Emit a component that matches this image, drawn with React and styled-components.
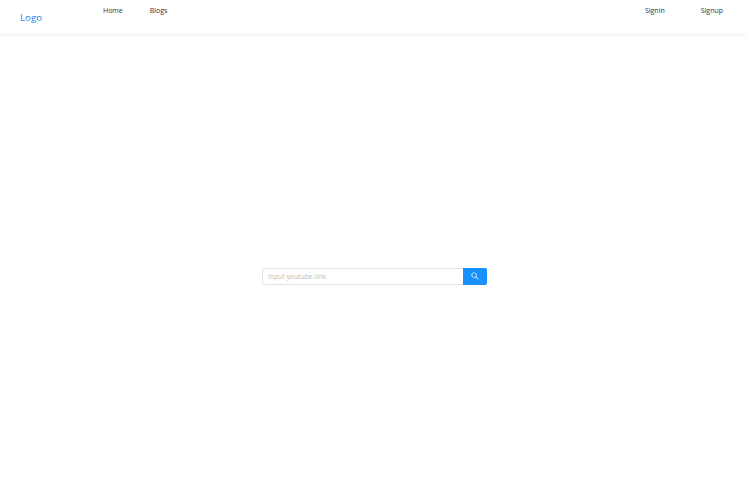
import React from 'react'
import styled, { createGlobalStyle } from 'styled-components'

const GlobalStyle = createGlobalStyle`
  html, body {
    margin: 0;
    height: 100%;
    background: #fff;
    font-family: "Open Sans", "Noto Sans", sans-serif;
  }
  #root {
    height: 100%;
  }
`

const Page = styled.div`
  display: flex;
  flex-direction: column;
  height: 482px;
`

const Header = styled.header`
  display: flex;
  align-items: flex-start;
  height: 33px;
  flex-shrink: 0;
  background: #fff;
  box-shadow: 0 1px 8px rgba(0, 0, 0, 0.07);
`

const Logo = styled.a`
  width: 83px;
  padding-left: 20px;
  font-size: 9.7px;
  line-height: 35px;
  color: #2a7fe6;
`

const NavLink = styled.a`
  font-size: 7px;
  line-height: 21px;
  color: #33333a;
  margin-right: ${props => props.$gap}px;
`

const Spacer = styled.div`
  flex: 1;
`

const Main = styled.main`
  flex: 1;
  display: flex;
  justify-content: center;
  padding: 235px 1px 0 0;
`

const SearchBar = styled.form`
  display: flex;
  width: 225px;
  height: 17px;
`

const SearchInput = styled.input`
  flex: 1;
  min-width: 0;
  box-sizing: border-box;
  height: 100%;
  padding: 0 5px;
  border: 1px solid #e2e2e2;
  border-right: 0;
  border-radius: 2px 0 0 2px;
  outline: none;
  font-family: inherit;
  font-size: 6.8px;
  color: #333;

  &::placeholder {
    color: #bdbdbd;
    opacity: 1;
  }
`

const SearchButton = styled.button`
  display: flex;
  align-items: center;
  justify-content: center;
  width: 24px;
  height: 100%;
  padding: 0 0 2px;
  border: 0;
  border-radius: 0 2px 2px 0;
  background: #1890ff;
  color: #fff;
`

const SearchIcon = () => (
  <svg width="8" height="8" viewBox="64 64 896 896" fill="currentColor">
    <path d="M909.6 854.5L649.9 594.8C690.2 542.7 712 479 712 412c0-80.2-31.3-155.4-87.9-212.1-56.6-56.7-132-87.9-212.1-87.9s-155.5 31.3-212.1 87.9C143.2 256.5 112 331.8 112 412c0 80.1 31.3 155.5 87.9 212.1C256.5 680.8 331.8 712 412 712c67 0 130.6-21.8 182.7-62l259.7 259.6a8.2 8.2 0 0 0 11.6 0l43.6-43.5a8.2 8.2 0 0 0 0-11.6zM570.4 570.4C528 612.7 471.8 636 412 636s-116-23.3-158.4-65.6C211.3 528 188 471.8 188 412s23.3-116.1 65.6-158.4C296 211.3 352.2 188 412 188s116.1 23.2 158.4 65.6S636 352.2 636 412s-23.3 116.1-65.6 158.4z" />
  </svg>
)

const App = () => (
  <Page>
    <GlobalStyle />
    <Header>
      <Logo>Logo</Logo>
      <NavLink $gap={27}>Home</NavLink>
      <NavLink $gap={0}>Blogs</NavLink>
      <Spacer />
      <NavLink $gap={36}>Signin</NavLink>
      <NavLink $gap={27}>Signup</NavLink>
    </Header>
    <Main>
      <SearchBar onSubmit={e => e.preventDefault()}>
        <SearchInput placeholder="input youtube-link" />
        <SearchButton type="submit" aria-label="search">
          <SearchIcon />
        </SearchButton>
      </SearchBar>
    </Main>
  </Page>
)

export default App
